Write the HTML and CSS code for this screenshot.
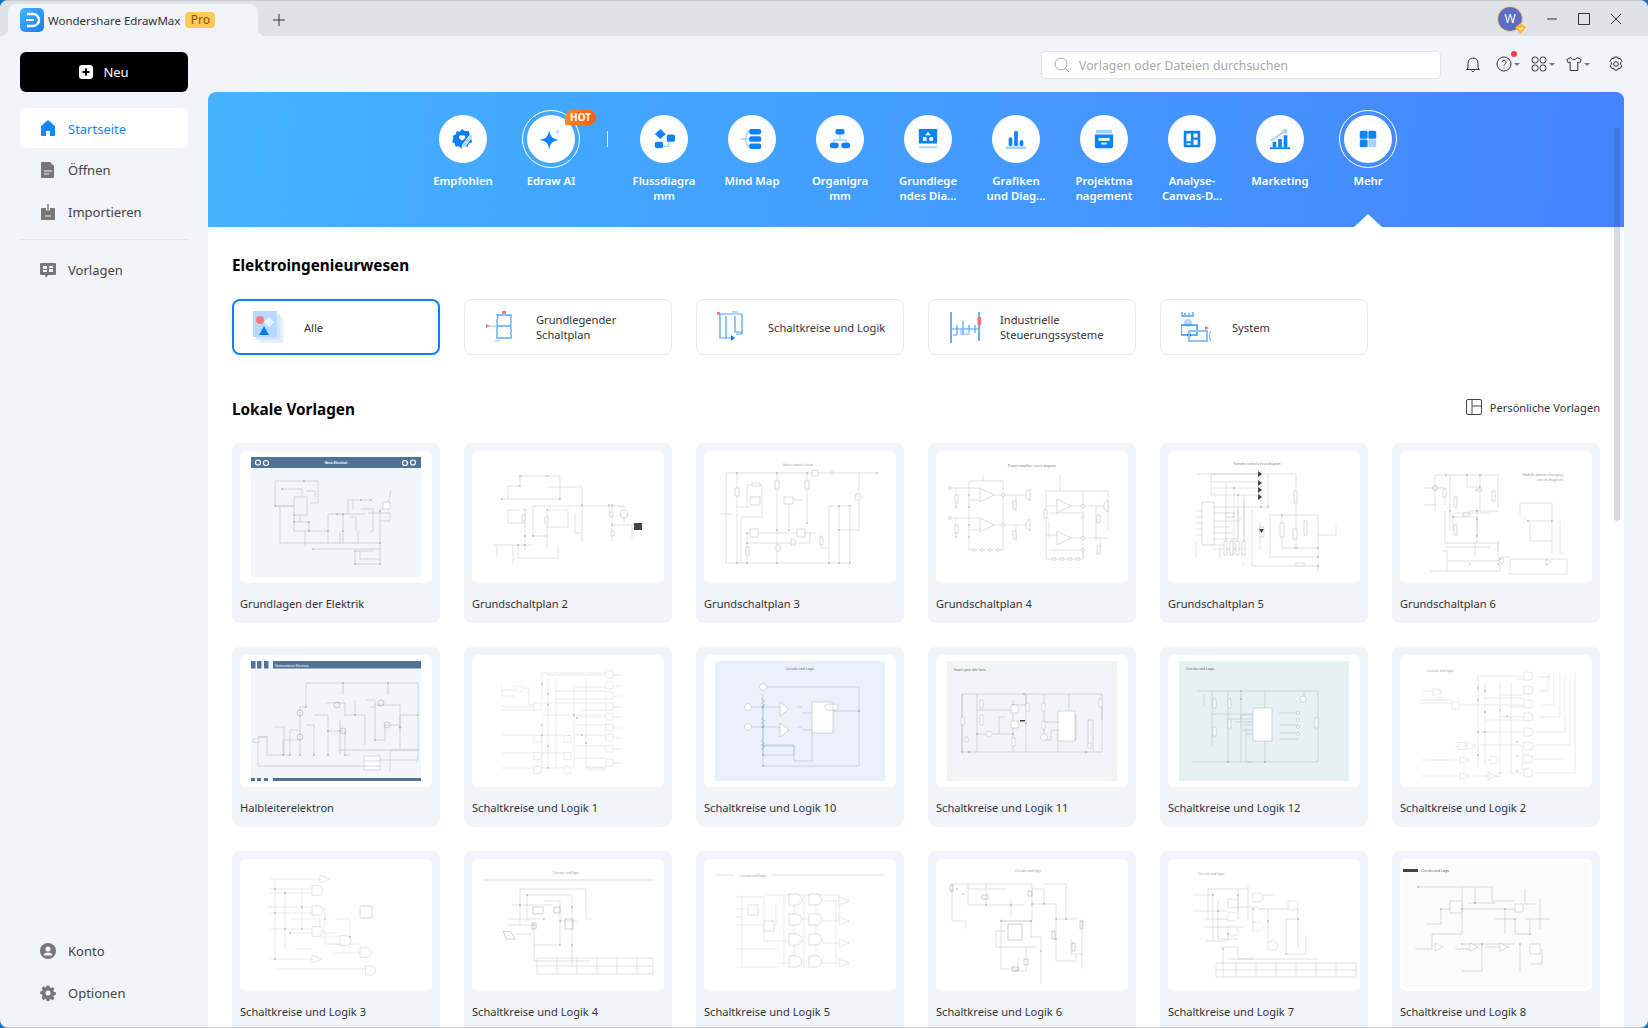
FILE: index.html
```html
<!DOCTYPE html>
<html lang="de">
<head>
<meta charset="utf-8">
<title>Wondershare EdrawMax</title>
<link rel="stylesheet" href="styles.css">
</head>
<body>
<svg class="defs" aria-hidden="true">
  <symbol id="and" viewBox="0 0 10 8" overflow="visible"><path d="M0 0h5a4 4 0 0 1 0 8H0z"/></symbol>
  <symbol id="amp" viewBox="0 0 10 8" overflow="visible"><path d="M0 0l10 4-10 4z"/></symbol>
  <symbol id="box" viewBox="0 0 8 8" overflow="visible"><path d="M0 0h8v8H0z"/></symbol>
</svg>
<div class="app">
  <header class="titlebar">
    <div class="tab">
      <svg class="logo" viewBox="0 0 24 24"><defs><linearGradient id="lg" x1="0" y1="0" x2="1" y2="1"><stop offset="0" stop-color="#45b4ff"/><stop offset="1" stop-color="#1a7cf5"/></linearGradient></defs><rect width="24" height="24" rx="5" fill="url(#lg)"/><path d="M7 6h6a6 6 0 0 1 0 12H7" fill="none" stroke="#fff" stroke-width="2.4"/><path d="M6 12h8" stroke="#fff" stroke-width="2.2"/></svg>
      <span class="tab-title">Wondershare EdrawMax</span>
      <span class="pro">Pro</span>
    </div>
    <svg class="newtab" viewBox="0 0 12 12"><path d="M6 0v12M0 6h12"/></svg>
    <div class="win">
      <div class="avatar">W<svg class="avatar-badge" viewBox="0 0 10 10"><path d="M5 0l5 4-5 6-5-6z" fill="#ffb52e"/><path d="M3 4l2 2 2-2" fill="none" stroke="#fff"/></svg></div>
      <svg class="winbtn" viewBox="0 0 12 12"><path d="M1 6h10"/></svg>
      <svg class="winbtn" viewBox="0 0 12 12"><path d="M.5.5h11v11H.5z"/></svg>
      <svg class="winbtn" viewBox="0 0 12 12"><path d="M1 1l10 10M11 1L1 11"/></svg>
    </div>
  </header>
  <div class="layout">
    <aside class="sidebar">
      <button class="newbtn"><svg viewBox="0 0 14 14"><rect width="14" height="14" rx="3" fill="#fff"/><path d="M7 3.500v7M3.500 7h7" stroke="#000" stroke-width="2"/></svg><span>Neu</span></button>
      <nav class="nav">
        <a class="nav-item active"><svg viewBox="0 0 16 16"><path d="M8 0L1 6v9a1 1 0 0 0 1 1h4v-5h4v5h4a1 1 0 0 0 1-1V6z"/></svg><span>Startseite</span></a>
        <a class="nav-item"><svg viewBox="0 0 16 16"><path d="M2 0h8l4 4v11a1 1 0 0 1-1 1H2a1 1 0 0 1-1-1V1a1 1 0 0 1 1-1z"/><path d="M4 9h8M4 12h5" stroke="#f2f4f9" stroke-width="1.200"/></svg><span>Öffnen</span></a>
        <a class="nav-item"><svg viewBox="0 0 16 16"><path d="M2 4h4v3h4V4h4a1 1 0 0 1 1 1v10a1 1 0 0 1-1 1H2a1 1 0 0 1-1-1V5a1 1 0 0 1 1-1z"/><path d="M8 0v8M5 6l3 3 3-3" fill="none" stroke="#777" stroke-width="1.400"/><path d="M5 12h6" stroke="#f2f4f9" stroke-width="1.200"/></svg><span>Importieren</span></a>
        <div class="nav-sep"></div>
        <a class="nav-item"><svg viewBox="0 0 16 16"><path d="M1 1h14a1 1 0 0 1 1 1v10a1 1 0 0 1-1 1H8l-2 3-1-3H1a1 1 0 0 1-1-1V2a1 1 0 0 1 1-1z"/><path d="M3 4h4v3H3zM9 4h4v2H9zM9 7h4v3H9zM3 8h4v2H3z" fill="#f2f4f9"/></svg><span>Vorlagen</span></a>
      </nav>
      <div class="nav bottom">
        <a class="nav-item"><svg viewBox="0 0 16 16"><circle cx="8" cy="8" r="8"/><circle cx="8" cy="6" r="2.600" fill="#f2f4f9"/><path d="M3.500 12.500c.6-2.400 2.400-3 4.500-3s3.900.6 4.500 3z" fill="#f2f4f9"/></svg><span>Konto</span></a>
        <a class="nav-item"><svg viewBox="0 0 16 16"><path d="M6.500 0h3l.4 2.200 1.500.7 2-1.200 2 2.300-1.300 1.800.6 1.600 2.300.4v3l-2.300.4-.6 1.600 1.300 1.900-2.100 2.100-1.900-1.300-1.500.6-.4 2.300h-3l-.4-2.300-1.500-.6-1.900 1.300L.6 13.700l1.300-1.900-.6-1.600L-1 9.800v-3l2.300-.4.600-1.600L.6 3 2.700.9l1.900 1.300 1.500-.6z" transform="translate(1 .5) scale(.875)"/><circle cx="8" cy="8" r="2.500" fill="#f2f4f9"/></svg><span>Optionen</span></a>
      </div>
    </aside>
    <main class="main">
      <div class="topbar">
        <div class="search"><svg viewBox="0 0 16 16"><circle cx="7" cy="7" r="6"/><path d="M11.500 11.500L15 15"/></svg><span>Vorlagen oder Dateien durchsuchen</span></div>
        <div class="tools">
          <svg class="tool bell" viewBox="0 0 16 16"><path d="M3 12V7a5 5 0 0 1 10 0v5l1.500 1.500h-13zM6.500 14.500a1.600 1.600 0 0 0 3 0"/></svg>
          <span class="tool-wrap help"><svg class="tool" viewBox="0 0 16 16"><circle cx="8" cy="8" r="7"/><path d="M6 6.200a2 2 0 1 1 3 1.800c-.7.400-1 .8-1 1.600M8 11.500v1"/></svg><i class="dot"></i><i class="caret"></i></span>
          <span class="tool-wrap apps"><svg class="tool" viewBox="0 0 16 16"><rect x="1" y="1" width="6" height="6" rx="2.600"/><rect x="9" y="1" width="6" height="6" rx="2.600"/><rect x="1" y="9" width="6" height="6" rx="2.600"/><rect x="9" y="9" width="6" height="6" rx="2.600"/></svg><i class="caret"></i></span>
          <span class="tool-wrap shirt"><svg class="tool" viewBox="0 0 16 16"><path d="M5 1.500L.8 3.500l1.400 3.300 2-.7V14.500h7.600V6.100l2 .7 1.400-3.300L11 1.500c-.5 1.500-1.500 2-3 2s-2.500-.5-3-2z"/></svg><i class="caret"></i></span>
          <svg class="tool gear" viewBox="0 0 16 16"><path d="M6.300.8h3.400l.6 1.900 1.900-.5 1.700 2.900-1.300 1.400v1.600l1.300 1.400-1.700 2.900-1.900-.5-.6 1.900H6.300l-.6-1.900-1.900.5-1.700-2.900 1.300-1.400V6.500L2.100 5.100l1.700-2.900 1.900.5z" transform="translate(0 .2)"/><circle cx="8" cy="8" r="2.300"/></svg>
        </div>
      </div>
      <section class="panel">
        <div class="banner">
          <div class="cat"><span class="disc"><svg viewBox="0 0 24 24"><path d="M11 1l3 2.500 4-.5 1 3.500 3.500 2-1.500 3.500 1 3.500-3.500 1.500-1.500 3.500-3.500-.5-3 2.500-3-2.500-3.500.5-1-3.500L0 15l1.500-3.500L1 8.500l3-1.500 1-3.500 3.500.5z" fill="#0c7df2"/><path d="M11 8.500c1-1.300 3.500-.8 3.500 1.300 0 1.700-2 2.800-3.500 4-1.500-1.200-3.500-2.300-3.500-4 0-2.100 2.500-2.600 3.500-1.300z" fill="#fff"/><path d="M22.500 9l-8.500 11.500-3 1 .5-3L20 7z" fill="#a4d2ff" stroke="#fff"/></svg></span><b>Empfohlen</b></div>
          <div class="cat ring"><span class="disc"><svg viewBox="0 0 24 24"><path d="M10 2.500c1.100 7 3.500 9.300 10.500 10.500-7 1.200-9.400 3.500-10.500 10.500C8.900 16.500 6.500 14.200-.5 13 6.500 11.800 8.900 9.500 10 2.500z" fill="#0f82f7"/><path d="M19 1c.3 2 1 2.700 3 3-2 .3-2.700 1-3 3-.3-2-1-2.700-3-3 2-.3 2.700-1 3-3z" fill="#a4d2ff"/></svg></span><b>Edraw AI</b><i class="hot">HOT</i></div>
          <span class="vsep"></span>
          <div class="cat"><span class="disc"><svg viewBox="0 0 24 24"><path d="M17 13v7H9" fill="none" stroke="#a4d2ff" stroke-width="1.600"/><path d="M8 1l6 5.500L8 12 2 6.500z" fill="#0f82f7"/><rect x="15" y="7" width="9" height="8" rx="2" fill="#0f82f7"/><rect x="2" y="15" width="9" height="7" rx="2" fill="#0f82f7"/></svg></span><b>Flussdiagra<br>mm</b></div>
          <div class="cat"><span class="disc"><svg viewBox="0 0 24 24"><path d="M9 3C5 4 7 12 3 12c4 0 2 8 6 9M0 12h9" fill="none" stroke="#a4d2ff" stroke-width="1.500"/><rect x="9" y="1" width="13" height="6" rx="2" fill="#0f82f7"/><rect x="9" y="9" width="13" height="6" rx="2" fill="#0f82f7"/><rect x="9" y="17" width="13" height="6" rx="2" fill="#0f82f7"/></svg></span><b>Mind Map</b></div>
          <div class="cat"><span class="disc"><svg viewBox="0 0 24 24"><path d="M12 7v6M5 17v-4h14v4" fill="none" stroke="#a4d2ff" stroke-width="1.600"/><rect x="7" y="1" width="10" height="6" rx="2" fill="#0f82f7"/><rect x="1" y="16" width="9.500" height="6" rx="2" fill="#0f82f7"/><rect x="13.500" y="16" width="9.500" height="6" rx="2" fill="#0f82f7"/></svg></span><b>Organigra<br>mm</b></div>
          <div class="cat"><span class="disc"><svg viewBox="0 0 24 24"><rect x="2" y="1" width="20" height="16" rx="1" fill="#0f82f7"/><path d="M12 4l3 4H9z" fill="#fff"/><rect x="6.500" y="10" width="4" height="4" fill="#fff"/><circle cx="15.500" cy="12" r="2.300" fill="#fff"/><rect x="2" y="20" width="20" height="2" fill="#a4d2ff"/></svg></span><b>Grundlege<br>ndes Dia...</b></div>
          <div class="cat"><span class="disc"><svg viewBox="0 0 24 24"><rect x="4" y="10" width="4" height="10" rx="2" fill="#0f82f7"/><rect x="10" y="3" width="4" height="17" rx="2" fill="#0f82f7"/><rect x="16" y="13" width="4" height="7" rx="2" fill="#0f82f7"/><rect x="1" y="20" width="22" height="3" fill="#a4d2ff"/></svg></span><b>Grafiken<br>und Diag...</b></div>
          <div class="cat"><span class="disc"><svg viewBox="0 0 24 24"><path d="M3 3a1 1 0 0 1 1-1h16a1 1 0 0 1 1 1v3H3z" fill="#a4d2ff"/><path d="M2 7h20v13a2 2 0 0 1-2 2H4a2 2 0 0 1-2-2z" fill="#0f82f7"/><path d="M6 11h12v3H6zM9 16h6v2H9z" fill="#fff"/></svg></span><b>Projektma<br>nagement</b></div>
          <div class="cat"><span class="disc"><svg class="small" viewBox="0 0 24 24"><rect x="1" y="1" width="22" height="22" rx="1" fill="#0f82f7"/><path d="M4.500 4.500h6V15h-6zM14 4.500h5.500V10H14zM14 13h5.500v6.500H14zM4.500 17.500h6v2h-6z" fill="#fff"/></svg></span><b>Analyse-<br>Canvas-D...</b></div>
          <div class="cat"><span class="disc"><svg viewBox="0 0 24 24"><path d="M2 14L18 3" fill="none" stroke="#a4d2ff" stroke-width="2"/><path d="M14 2l6-1-1 6z" fill="#a4d2ff"/><path d="M4 15h4v6H4zM10 12h4v9h-4zM16 8h4v13h-4z" fill="#0f82f7"/><rect x="1" y="21" width="22" height="2" fill="#0f82f7"/></svg></span><b>Marketing</b></div>
          <div class="cat ring"><span class="disc"><svg class="small" viewBox="0 0 24 24"><rect x="1" y="1" width="10.500" height="10.500" rx="2" fill="#0f82f7"/><rect x="12.500" y="1" width="10.500" height="10.500" rx="2" fill="#0f82f7"/><rect x="1" y="12.500" width="10.500" height="10.500" rx="2" fill="#0f82f7"/><rect x="12.500" y="12.500" width="10.500" height="10.500" rx="2" fill="#a4d2ff"/></svg></span><b>Mehr</b></div>
          <i class="pointer"></i>
        </div>
        <div class="content">
          <h2 class="h-cat">Elektroingenieurwesen</h2>
          <div class="grid chips">
            <div class="chip selected"><svg viewBox="0 0 32 32"><rect x="6" y="6" width="24" height="26" fill="#e4f0ff"/><rect x="3" y="3" width="24" height="26" fill="#d2e6ff"/><rect x="0" y="0" width="24" height="26" fill="#b7d9ff"/><circle cx="7" cy="9" r="4" fill="#ff7b7b"/><path d="M16 6l5 5-5 5-5-5z" fill="#e8f3ff"/><path d="M11 15l5 9H6z" fill="#0a7cf0"/></svg><span>Alle</span></div>
            <div class="chip"><svg viewBox="0 0 32 32" fill="none" stroke="#5aa9f7" stroke-width="1.300"><path d="M12 4h14c1 2-1 3 0 5s-1 3 0 5l-1 1 1 1c-1 2 1 3 0 5s1 3 0 6H12c-1-3 1-4 0-6s1-3 0-5l1-1-1-1c1-2-1-3 0-5s1-3 0-5zM12 15h14"/><path d="M3 15h9M19 1v3M10 30h5" stroke="#b6d6fa"/><rect x="17" y="0" width="4" height="3" fill="#ff7b7b" stroke="none"/><path d="M1 13l4 2-4 2z" fill="#ff7b7b" stroke="none"/></svg><span>Grundlegender<br>Schaltplan</span></div>
            <div class="chip"><svg viewBox="0 0 32 32" fill="none" stroke="#4a9ff5" stroke-width="1.200"><path d="M3 3v24h12M3 3h22v20h-6M9 5v22M18 5v16h7V3"/><path d="M14 24l4 3-4 3z" fill="#0a7cf0" stroke="none"/><rect x="0" y="1" width="3" height="3" fill="#ff7b7b" stroke="none"/><rect x="15" y="0" width="6" height="4" fill="#b6d6fa" stroke="none"/></svg><span>Schaltkreise und Logik</span></div>
            <div class="chip"><svg viewBox="0 0 32 32" fill="none" stroke="#4a9ff5" stroke-width="1.200"><path d="M2 1v31M30 1v29" stroke="#0a7cf0"/><path d="M2 18h28M8 14v10M14 10v14M20 14v6M26 14v8M4 24h4"/><rect x="12" y="18" width="8" height="5" stroke="#8cc3fa"/><rect x="28.500" y="6" width="3.500" height="8" fill="#ff6b6b" stroke="none"/></svg><span>Industrielle<br>Steuerungssysteme</span></div>
            <div class="chip"><svg viewBox="0 0 32 32" fill="none" stroke="#1186f7" stroke-width="1.300"><path d="M1 1v4h11V1M4 4V2M8 4V2" stroke="#4a9ff5"/><circle cx="7" cy="12" r="4" fill="#b6d6fa" stroke="none"/><rect x="0" y="14" width="16" height="10"/><circle cx="8" cy="24" r="2" fill="#0a7cf0" stroke="none"/><path d="M8 20h18v10H8z" stroke="#8cc3fa" stroke-width="2"/><path d="M24 15l4 2-4 2z" fill="#ff6b6b" stroke="none"/><path d="M30 20c-2 3-2 7 0 10" stroke="#8cc3fa"/></svg><span>System</span></div>
          </div>
          <div class="local-head">
            <h2>Lokale Vorlagen</h2>
            <a class="personal"><svg viewBox="0 0 16 16"><rect x=".5" y=".5" width="15" height="15" rx="1.500"/><path d="M6 .5v15M6 7h9.500"/></svg>Persönliche Vorlagen</a>
          </div>
          <div class="grid templates">

            <article class="tpl"><div class="thumb"><svg viewBox="0 0 192 132">
              <rect class="sheet s-blue" x="11" y="6" width="170" height="120"/><rect class="hdr" x="11" y="6" width="170" height="11"/>
              <g class="gearc"><circle cx="18" cy="11.500" r="2.500"/><circle cx="26" cy="12" r="2.500"/><circle cx="165" cy="12" r="2.500"/><circle cx="173" cy="11.500" r="2.500"/></g>
              <text class="t-white" x="96" y="13">Basic Electrical</text>
              <path class="w dk" d="M35 30H78V52H70M35 30V55H54M42 38H62V46M35 55H54M66 40H75V46M54 46H67V64H54ZM54 64V80H88M54 71H69V80M60 64V71M88 63V92M88 63H125M40 55V92H140M73 98H139M65 96V80M108 49H131M108 49V63M113 49V58M121 58H133V80H130M103 63V92M100 80V92M110 66H116V80M118 80V92M140 60V92M128 62H150V70H140M151 40L148 52M140 60L146 52M115 101V113M115 113H140M120 100V108H140M140 92V113M115 100H133"/>
              <path class="d sm" d="M35 55h0M42 38h0M64 30h0M54 64h0M54 71h0M69 71h0M69 80h0M88 80h0M97 63h0M103 63h0M103 80h0M140 60h0M140 92h0M115 113h0M140 113h0M73 98h0M115 100h0M121 49h0M131 49h0"/>
              <path class="p" d="M143 51h7v7h-7z"/>
            </svg></div><p>Grundlagen der Elektrik</p></article>

            <article class="tpl"><div class="thumb"><svg viewBox="0 0 192 132">
              <path class="w" d="M48 25H88V48H30M48 25V35H36V48M75 36H110V91M61 55H152V72M36 59H48M36 59V72H53M53 59V99M61 55V85H75M75 59V97M75 59H96V76H75M21 94H61M25 94V106M41 94V113M46 94V107H86V94M137 54V64M140 54V74H152M140 74V90M160 74V90M103 62V82H110M152 74H166"/>
              <path class="d sm" d="M48 25h0M75 25h0M48 35h0M88 48h0M53 59h0M75 59h0M110 54h0M137 54h0M140 54h0M140 74h0M53 85h0M61 85h0M46 94h0M53 94h0M30 48h0"/>
              <circle class="p" cx="152" cy="63" r="4"/><path class="p" d="M50 64h3v6h-3zM73 66h3v6h-3zM138 61h3v5h-3zM139 80h3v5h-3z"/>
              <rect x="162" y="72" width="8" height="7" fill="#444"/>
            </svg></div><p>Grundschaltplan 2</p></article>

            <article class="tpl"><div class="thumb"><svg viewBox="0 0 192 132">
              <text class="t-grey" x="94" y="15">Voice control circuit</text>
              <path class="w" d="M22 22H173M22 22V112H146M16 63H28M33 22V112M73 22V112M103 22V72M43 34H58V66H37V112M43 34V56M85 49H98M85 49V79M43 82H112M43 92H106V82M117 82V97H125M125 55V112M125 55H146V112M135 55V112M135 79H155V22M43 82V112M33 56H46"/>
              <path class="d sm" d="M33 22h0M73 22h0M103 22h0M173 22h0M33 112h0M43 112h0M73 112h0M125 112h0M135 112h0M146 112h0M43 82h0M43 92h0M73 79h0M85 79h0M103 72h0M135 55h0M146 55h0M135 79h0"/>
              <path class="p" d="M46 46h10v8H46zM46 78h8v8h-8zM93 78h8v8h-8zM80 46h9v7h-9zM71 30h4v8h-4zM101 30h4v8h-4zM108 19h6v6h-6zM31 37h4v8h-4zM48 32h8v3h-8zM42 96h3v8h-3zM72 94h4v6h-4zM116 86h3v8h-3zM87 88h4v6h-4z"/>
              <circle class="p" cx="154" cy="46" r="3"/><circle class="p" cx="128" cy="22" r="1.500"/>
            </svg></div><p>Grundschaltplan 3</p></article>

            <article class="tpl"><div class="thumb"><svg viewBox="0 0 192 132">
              <text class="t-grey dk" x="96" y="16">Power amplifier circuit diagram</text>
              <path class="w" d="M33 30H67V99M33 30V99H67M14 37H44M14 67H44M33 49H44M33 79H44M58 44H95M58 74H95M20 37V56M20 67V86M80 44V60M80 74V90M110 40H172V80M110 40V108H147V40M121 48V51M110 55H121M135 55H172M113 62H147M120 62H121M135 87H172M113 87V70M110 84H121M113 99H147V108M124 24V40M47 24V30M160 55V90M164 87V100"/>
              <path class="d sm" d="M33 44h0M33 56h0M33 74h0M33 86h0M20 56h0M20 86h0"/>
              <path class="p" d="M44 37l14 7-14 7zM44 67l14 7-14 7zM121 48l14 7-14 7zM121 80l14 7-14 7z"/>
              <path class="p" d="M19 44h3v8h-3zM19 74h3v8h-3zM77 50h3v8h-3zM77 80h3v8h-3zM108 59h3v8h-3zM161 64h3v8h-3zM161 95h3v8h-3zM90 41l4-3v12l-4-3zM90 71l4-3v12l-4-3zM168 52l4-3v12l-4-3z"/>
              <g class="op"><circle cx="14" cy="37" r="1.500"/><circle cx="14" cy="67" r="1.500"/><circle cx="38" cy="99" r="1.500"/><circle cx="46" cy="99" r="1.500"/><circle cx="54" cy="99" r="1.500"/><circle cx="62" cy="99" r="1.500"/><circle cx="118" cy="108" r="1.500"/><circle cx="126" cy="108" r="1.500"/><circle cx="134" cy="108" r="1.500"/><circle cx="142" cy="108" r="1.500"/><circle cx="67" cy="44" r="1.500"/><circle cx="67" cy="74" r="1.500"/><circle cx="147" cy="55" r="1.500"/><circle cx="147" cy="87" r="1.500"/><circle cx="147" cy="99" r="1.500"/><circle cx="147" cy="66" r="1.500"/></g>
            </svg></div><p>Grundschaltplan 4</p></article>

            <article class="tpl"><div class="thumb"><svg viewBox="0 0 192 132">
              <text class="t-grey dk" x="89" y="14">Remote control circuit diagram</text>
              <path class="w" d="M29 23H100M43 23V44M43 23H93M43 31H93M43 37H93M43 44H93M93 23V56M100 23H128V97M100 23V56H46M102 64H150V97M102 64V106H150M114 64V97H150M46 62H62M46 70H72V66M46 76H62M46 82H65M46 88H70V58M46 94H58V31M46 98H76V44M66 37V104M70 44V104M76 50V104M92 70V99M84 58V115H150M28 60H34M28 66H34M28 72H34M28 78H34M28 84H34M28 90V108M52 94V108M74 112H76M150 97V122M150 84H168V74"/>
              <path class="p" d="M34 51h12v43H34zM112 72h4v14h-4zM125 78h4v10h-4zM136 70h3v14h-3zM62 90h3v14h-3zM68 90h3v14h-3zM74 90h3v14h-3zM56 90h3v14h-3zM92 76h4v10h-4zM126 40h3v12h-3zM58 62h8v4h-8zM128 112h8v3h-8z"/>
              <path class="fill" d="M90 20l4 3-4 3zM90 29l4 3-4 3zM90 36l4 3-4 3zM90 43l4 3-4 3zM91 78h5l-2.500 4z"/>
              <path class="d sm" d="M93 56h0M100 56h0M66 37h0M70 44h0M114 64h0M128 97h0M150 97h0M150 106h0M150 115h0"/>
            </svg></div><p>Grundschaltplan 5</p></article>

            <article class="tpl"><div class="thumb"><svg viewBox="0 0 192 132">
              <text class="t-grey big" x="163" y="25">Mobile phone charging</text><text class="t-grey big" x="163" y="30">circuit diagram</text>
              <path class="w" d="M35 24H98V57M35 24V60M24 37H45V54M24 54H37M50 24V80M67 24V36H80M80 24V60M67 60H98M77 56V92M45 60V92H98V100M45 96H90M30 120H100M53 62V80M55 62H90M53 66H77V85M120 52H152V102M120 52V63L128 70H152M130 70V90H152M160 70V102H164M110 108H167V123H110ZM47 120V100H43M100 120V106H110M98 90V110M75 90V105M48 110H100"/>
              <path class="d sm" d="M46 24h0M67 24h0M80 24h0M80 36h0M50 60h0M77 60h0M77 68h0M77 85h0M128 70h0M152 70h0M98 113h0M70 113h0M53 66h0M100 108h0"/>
              <circle class="p dk" cx="35" cy="37" r="2.500"/><path class="p" d="M43 38h3v8h-3zM54 46h3v10h-3zM54 74h3v10h-3zM92 40h3v10h-3zM63 62h7v3h-7zM76 38h6v2h-6zM98 110l5-3v6zM146 108l5 3-5 3z"/>
            </svg></div><p>Grundschaltplan 6</p></article>

            <article class="tpl"><div class="thumb"><svg viewBox="0 0 192 132">
              <rect class="sheet s-blue" x="11" y="6" width="170" height="120"/>
              <path class="hdr" d="M11 6h4.500v7.500H11zM17 6h4.500v7.500H17zM24 6h4.500v7.500H24zM33 6h148v7.500H33zM11 123h4v3h-4zM17 123h4v3h-4zM24 123h4v3h-4zM33 123h148v3H33z"/>
              <text class="t-white left" x="35" y="11.500">Semiconductor Electronic</text>
              <path class="w dk" d="M66 28H178V95H150V117M178 95V105H138M66 28V52H60V75H50V100M50 100H27V82H18V111H135M35 72H44V100M18 82H28M60 75V100M43 100V85H62M66 70H74V100M74 60H88V100M88 76H105V100H110M105 60H125V90M115 45V60M125 45H135V85H145M145 85V70H160V60H178M85 48H105V62M103 28V40M148 28V40M135 50H160V75M160 72V95M98 95H180M130 52H135M100 65V100"/>
              <path class="d sm" d="M103 28h0M148 28h0M43 100h0M60 100h0M74 100h0M88 100h0M105 100h0M50 100h0M88 76h0M66 52h0M115 60h0M135 85h0M160 72h0M178 60h0"/>
              <g class="op dk"><circle cx="60" cy="82" r="3"/><circle cx="60" cy="58" r="3"/><circle cx="97" cy="50" r="3"/><circle cx="103" cy="76" r="3"/><circle cx="141" cy="48" r="3"/><circle cx="147" cy="70" r="3"/></g>
              <path class="p" d="M124 101h16v14h-16zM124 106h16M124 111h16M13 84h6v3h-6z"/>
            </svg></div><p>Halbleiterelektron</p></article>

            <article class="tpl"><div class="thumb"><svg viewBox="0 0 192 132">
              <path class="w lt" d="M70 18V48M70 18H134M74 20H134M30 35H44M30 30V41H44M50 33H57V50H62M29 52H62M29 55H62M30 80H62M30 98H62M30 113H62M70 80H92M70 98H92M70 113H92M70 48H134M70 60H134M70 70V113M76 23V113M84 23V113M82 36H134M82 44H134M102 32H134M102 70H134M102 80H134M102 91H134M102 103H134M102 32V113M104 62H134M110 55H134M114 23V115M116 115H134M114 112H134M114 113H134M138 20H150M138 31H150M138 41H150M138 52H150M138 62H150M138 73H150M138 83H150M138 94H150M138 108H150"/>
              <g class="lg"><use href="#box" x="62" y="48" width="7" height="7"/><use href="#box" x="62" y="80" width="7" height="8"/><use href="#box" x="62" y="97" width="7" height="8"/><use href="#box" x="62" y="111" width="7" height="8"/><use href="#box" x="92" y="80" width="7" height="8"/><use href="#box" x="92" y="97" width="7" height="8"/><use href="#box" x="92" y="111" width="7" height="8"/><use href="#box" x="134" y="16" width="7" height="7"/><use href="#box" x="134" y="27" width="7" height="7"/><use href="#box" x="134" y="37" width="7" height="7"/><use href="#box" x="134" y="48" width="7" height="7"/><use href="#box" x="134" y="58" width="7" height="7"/><use href="#box" x="134" y="69" width="7" height="7"/><use href="#box" x="134" y="79" width="7" height="7"/><use href="#box" x="134" y="90" width="7" height="7"/><use href="#box" x="134" y="104" width="7" height="7"/><use href="#box" x="44" y="31" width="6" height="6"/></g>
              <path class="d sm" d="M70 29h0M76 39h0M76 50h0M70 70h0M76 91h0M102 60h0M105 63h0M110 80h0M114 88h0M70 80h0M76 113h0"/>
            </svg></div><p>Schaltkreise und Logik 1</p></article>

            <article class="tpl"><div class="thumb"><svg viewBox="0 0 192 132">
              <rect class="sheet s-sky" x="11" y="6" width="170" height="120"/>
              <text class="t-dark" x="96" y="15">Circuits and Logic</text>
              <path class="w bl" d="M59 32H155V111H59M44 52H76M59 39V111M44 72H76M59 52V100M98 58H116M98 75H108V106H90V90M90 90H59M59 91H90V100H59M120 56H155M93 52H98M93 72H98"/>
              <path class="d sm" d="M59 52h0M59 72h0M59 100h0M59 111h0M155 56h0"/>
              <path class="p wf" d="M76 47l9 7-9 7zM76 68l9 7-9 7zM108 47h21v31h-21zM121 52c0-2 1-3 3-3h7c2 0 3 1 3 3s-1 3-3 3h-7c-2 0-3-1-3-3z"/>
              <path class="w bl" d="M59 42l-2 2 4 2-4 2 4 2-4 2 2 2M59 62l-2 2 4 2-4 2 4 2-4 2 2 2M59 84l-2 2 4 2-4 2 4 2-4 2 2 2"/>
              <g class="op wf"><ellipse cx="59" cy="32" rx="3.500" ry="3.500"/><circle cx="44" cy="52" r="3.500"/><circle cx="44" cy="72" r="3.500"/></g>
            </svg></div><p>Schaltkreise und Logik 10</p></article>

            <article class="tpl"><div class="thumb"><svg viewBox="0 0 192 132">
              <rect class="sheet s-grey" x="11" y="6" width="170" height="120"/>
              <text class="t-dark left" x="18" y="16">Insert your title here</text>
              <path class="w dk" d="M26 39H166V97H26ZM26 39V97M41 39V58M41 58V97M77 50H90V39M77 45V97M77 55H41M90 40V97M108 39V85M133 39V60M108 85H115V75M115 75H122V97M108 67H124M122 60H140V85M140 85H122M41 79H77M63 79V62H69M166 50V65M152 65H157V97M152 65V90"/>
              <path class="d sm" d="M88 39h0M26 97h0M33 97h0M77 79h0M77 50h0M41 79h0M150 97h0M90 68h0"/>
              <path class="p" d="M122 56h17v30h-17zM75 50h7v8h-7zM75 66h7v7h-7zM44 45h3v8h-3zM44 60h3v10h-3zM90 48h3v8h-3zM106 48h3v8h-3zM106 66h3v8h-3zM163 44h3v8h-3zM25 62h3v8h-3zM152 88h3v5h-3zM76 83h3v8h-3zM29 82h3v5h-3z"/>
              <path class="fill" d="M84 65h5v1.500h-5z"/>
              <g class="op"><circle cx="108" cy="82" r="3.500"/><circle cx="53" cy="79" r="3"/></g>
            </svg></div><p>Schaltkreise und Logik 11</p></article>

            <article class="tpl"><div class="thumb"><svg viewBox="0 0 192 132">
              <rect class="sheet s-teal" x="11" y="6" width="170" height="120"/>
              <text class="t-dark left" x="18" y="15">Circuits and Logic</text>
              <path class="w tl" d="M29 36H150M150 36V107H24M44 36V90M60 36V107M73 36V107M73 64V60H85M44 59H86M60 64H85M67 67H85M73 70H85M78 73V107H85M74 75H85M78 79H85M97 36V56M97 80V107M111 58H130M111 70H130M111 78H130M111 84H130M136 36V46M36 40V50"/>
              <path class="d sm" d="M73 36h0M73 44h0M97 107h0M60 107h0"/>
              <path class="p wf" d="M85 53h19v33H85zM45 44h3v9h-3zM60 44h3v9h-3zM45 72h3v9h-3zM60 64h3v9h-3zM147 63h3v10h-3z"/>
              <g class="op wf"><circle cx="135" cy="44" r="3"/><circle cx="130" cy="58" r="1.500"/><circle cx="130" cy="65" r="1.500"/><circle cx="130" cy="72" r="1.500"/><circle cx="130" cy="79" r="1.500"/></g>
            </svg></div><p>Schaltkreise und Logik 12</p></article>

            <article class="tpl"><div class="thumb"><svg viewBox="0 0 192 132">
              <text class="t-grey left" x="27" y="17">Circuits and logic</text>
              <path class="w lt" d="M22 36H33M20 45H52M20 48H52M37 34H40V45M52 50H125M78 21H124M78 21V112M85 28V110M100 27V117M117 24H124M85 43H124M100 40H124M107 52H124M111 27V118M100 62H124M85 65H124M78 77H125M55 91H67M22 105H58M22 121H58M35 105H45M80 90H112M88 105H100M72 121H100M112 90H122M110 118H122M122 90V116M138 22H150V18M140 36H148V18M140 50H154V18M140 62H160V18M135 77H165V18M135 90H170V18M135 104H165M135 118H175V18"/>
              <g class="lg"><use href="#amp" x="33" y="33" width="9" height="8"/><use href="#box" x="52" y="47" width="7" height="7"/><use href="#box" x="58" y="87" width="7" height="8"/><use href="#amp" x="67" y="87" width="9" height="8"/><use href="#amp" x="60" y="101" width="9" height="8"/><use href="#box" x="90" y="101" width="7" height="8"/><use href="#amp" x="60" y="117" width="9" height="8"/><use href="#amp" x="88" y="117" width="9" height="8"/><use href="#and" x="124" y="17" width="10" height="8"/><use href="#and" x="124" y="31" width="10" height="8"/><use href="#and" x="124" y="45" width="10" height="8"/><use href="#and" x="124" y="58" width="10" height="8"/><use href="#and" x="124" y="73" width="10" height="8"/><use href="#and" x="124" y="87" width="10" height="8"/><use href="#and" x="124" y="100" width="10" height="8"/><use href="#and" x="124" y="114" width="10" height="8"/></g>
              <path class="d sm" d="M78 33h0M85 36h0M78 45h0M85 57h0M100 55h0M107 61h0M78 77h0M85 77h0M78 100h0M100 118h0M117 87h0M117 101h0M117 116h0"/>
            </svg></div><p>Schaltkreise und Logik 2</p></article>

            <article class="tpl"><div class="thumb"><svg viewBox="0 0 192 132">
              <path class="w lt" d="M30 20H88M30 30H80M30 34H80M35 20V100M45 30V90M62 30V70M28 48H72M28 54H72M50 60H80V78H100M28 70H72M50 74H95M85 48V85H100M95 60H110M110 60V90M93 94H125M55 90H72M28 100H75M35 110H130M90 85H120"/>
              <g class="lg"><use href="#amp" x="80" y="16" width="10" height="8"/><use href="#and" x="72" y="26" width="12" height="11"/><use href="#and" x="72" y="46" width="12" height="11"/><use href="#and" x="72" y="67" width="12" height="11"/><use href="#and" x="100" y="76" width="12" height="11"/><use href="#and" x="120" y="88" width="12" height="11"/><use href="#amp" x="72" y="96" width="10" height="8"/><use href="#and" x="125" y="107" width="12" height="9"/><use href="#box" x="120" y="47" width="12" height="12"/></g>
              <path class="d sm" d="M35 30h0M45 34h0M62 48h0M35 54h0M50 74h0M45 70h0M85 60h0M35 100h0M62 70h0M110 78h0"/>
            </svg></div><p>Schaltkreise und Logik 3</p></article>

            <article class="tpl"><div class="thumb"><svg viewBox="0 0 192 132">
              <text class="t-grey" x="94" y="15">Circuits and logic</text>
              <path class="w tl" d="M13 21H181"/>
              <path class="w" d="M48 30H114V60M55 36H100M48 30V66M55 36V62M40 46H80M36 66H62M36 60H72M72 42H88V86M88 62H105M100 36V108M62 66V86H88M44 75H60M62 86V102H118M114 60H120"/>
              <path class="d sm" d="M55 36h0M48 46h0M72 60h0M88 62h0M100 48h0M62 66h0M88 86h0M100 86h0"/>
              <path class="p dk" d="M31 72l8 1 4 7h-9zM61 48h10v7H61zM82 48h6v6h-6zM93 60h8v10h-8zM60 64h4v6h-4z"/>
              <path class="w" d="M65 99H181V115H65ZM85 99V115M105 99V115M125 99V115M145 99V115M165 99V115M65 107H181"/>
            </svg></div><p>Schaltkreise und Logik 4</p></article>

            <article class="tpl"><div class="thumb"><svg viewBox="0 0 192 132">
              <path class="w dk" d="M13 16H30M68 16H181" stroke-dasharray="2 .5"/>
              <text class="t-grey" x="49" y="18">Circuits and logic</text>
              <path class="w lt" d="M38 36V108M32 50H50M32 38H60V82M60 82H100M32 58H38M32 66H72V45M60 36H135V60M80 36V108M100 36V108M90 40V106M112 36V108M118 42H135M118 62H135M118 84H135M118 104H135M90 60H118M112 82H118M75 104H100M32 90H75M32 108H75M132 42V108"/>
              <g class="lg"><use href="#box" x="44" y="44" width="10" height="14"/><use href="#box" x="60" y="60" width="10" height="14"/><use href="#and" x="85" y="34" width="14" height="13"/><use href="#and" x="85" y="54" width="14" height="13"/><use href="#and" x="85" y="74" width="14" height="13"/><use href="#and" x="85" y="96" width="14" height="13"/><use href="#and" x="105" y="34" width="14" height="13"/><use href="#and" x="105" y="54" width="14" height="13"/><use href="#and" x="105" y="74" width="14" height="13"/><use href="#and" x="105" y="96" width="14" height="13"/><use href="#amp" x="135" y="38" width="10" height="8"/><use href="#amp" x="135" y="58" width="10" height="8"/><use href="#amp" x="135" y="80" width="10" height="8"/><use href="#amp" x="135" y="100" width="10" height="8"/></g>
            </svg></div><p>Schaltkreise und Logik 5</p></article>

            <article class="tpl"><div class="thumb"><svg viewBox="0 0 192 132">
              <text class="t-grey" x="92" y="13">Circuits and logic</text>
              <path class="w" d="M16 25H96V62H65M16 25V62H30M32 30H70M30 62V70M32 25V46H50M50 25V46M50 46H88M75 40V58M96 30H108V45H120V60M96 45H108M108 25H130V60M120 60H140V58M65 62H95V78H105V125M65 60V110H80V113M70 72H60V88H100M90 88V112M90 112H76M82 112V100M120 60V102H140V95M135 80V95H146M146 60V110"/>
              <path class="d sm" d="M21 30h0M27 35h0M50 46h0M75 46h0M96 45h0M108 45h0M65 62h0M95 62h0M105 92h0M120 60h0M130 60h0M120 80h0"/>
              <path class="p dk" d="M14 26h3v6h-3zM46 36h6v4H46zM92 32h4v5h-4zM72 65h14v16H72zM116 72h3v8h-3zM136 84h3v8h-3zM144 62h3v8h-3zM88 100h4v6h-4zM76 108h6v4h-6z"/>
            </svg></div><p>Schaltkreise und Logik 6</p></article>

            <article class="tpl"><div class="thumb"><svg viewBox="0 0 192 132">
              <text class="t-grey left" x="30" y="16">Circuits and logic</text>
              <path class="w" d="M40 30H80M40 30V60M45 33V82M25 36H45M25 52H60M36 60H60M36 68H76M50 40V80H70M60 48H90M70 36V52M70 30V60M80 24V62M85 50V70M52 88H70V100H85M90 36H106M90 50H130V90M130 60H118V95H138M100 50V80M38 82H60V75M138 76V95M60 100H150M55 90V118"/>
              <g class="lg"><use href="#and" x="60" y="40" width="11" height="9"/><use href="#and" x="60" y="53" width="11" height="9"/><use href="#and" x="60" y="68" width="11" height="9"/><use href="#and" x="85" y="34" width="11" height="9"/><use href="#and" x="85" y="63" width="11" height="9"/><use href="#and" x="120" y="42" width="11" height="9"/><use href="#and" x="100" y="82" width="11" height="9"/></g>
              <path class="w" d="M48 104H188V118H48ZM68 104V118M88 104V118M108 104V118M128 104V118M148 104V118M168 104V118M48 111H188"/>
              <path class="d sm" d="M45 36h0M50 52h0M70 36h0M85 50h0M60 75h0M100 62h0M118 95h0M130 60h0M55 90h0"/>
            </svg></div><p>Schaltkreise und Logik 7</p></article>

            <article class="tpl"><div class="thumb"><svg viewBox="0 0 192 132">
              <rect class="sheet s-tile" x="3" y="4" width="186" height="124"/>
              <rect x="3" y="10" width="15" height="3" fill="#444"/><text class="t-dark left" x="21" y="13">Circuits and Logic</text>
              <path class="w dk" d="M18 28H92M62 28V50M41 50H115M41 50V65H26M62 50V75H50M68 44H95M75 28V44M92 28V42H115M125 30V45H135M140 40V70M95 60H115V75H130V60M125 60H150M105 50V75M32 75H50M32 75V90H15M62 85H115M55 90H70M82 85V112H62M85 88H110M120 85V112M142 90V105M130 105H142"/>
              <path class="lg dkst" d="M50 42h12v12H50zM70 84l8 4-8 4zM100 84l8 4-8 4zM35 84l8 4-8 4zM115 45h8v8h-8zM130 85h10v10h-10z"/>
              <path class="d sm" d="M41 50h0M62 50h0M75 44h0M105 50h0M115 60h0M130 75h0M62 85h0M82 85h0M120 85h0M18 28h0"/>
            </svg></div><p>Schaltkreise und Logik 8</p></article>
          </div>
        </div>
        <i class="scrollthumb"></i>
      </section>
    </main>
  </div>
</div>
</body>
</html>
```
FILE: styles.css
```css
* { box-sizing: border-box; }
html, body { margin: 0; height: 100%; background: #1173c9; overflow: hidden; }
body { font-family: "Noto Sans", "Open Sans", sans-serif; color: #333; }
.defs { position: absolute; width: 0; height: 0; }

.app { width: 1648px; height: 1028px; display: flex; flex-direction: column; background: #f2f4f9; border-radius: 8px; border-top: 1px solid #c9cbd0; border-bottom: 1px solid #c9cbd0; overflow: hidden; }

/* title bar */
.titlebar { height: 35px; flex: none; display: flex; align-items: flex-end; background: #e1e2e6; padding-left: 8px; position: relative; }
.tab { width: 250px; height: 32px; background: #f2f4f9; border-radius: 8px 8px 0 0; display: flex; align-items: center; padding-left: 12px; position: relative; }
.tab::before, .tab::after { content: ""; position: absolute; bottom: 0; width: 8px; height: 8px; }
.tab::before { left: -8px; background: radial-gradient(circle at 0 0, transparent 8px, #f2f4f9 8.500px); }
.tab::after { right: -8px; background: radial-gradient(circle at 100% 0, transparent 8px, #f2f4f9 8.500px); }
.logo { width: 24px; height: 24px; flex: none; }
.tab-title { font-size: 11.500px; color: #333; margin-left: 4px; white-space: nowrap; }
.pro { margin-left: 5px; width: 30px; height: 16px; background: #ffc857; border-radius: 4px; font-size: 12px; line-height: 16px; text-align: center; color: #7b5a10; }
.newtab { width: 12px; height: 12px; margin: 0 0 10px 15px; fill: none; stroke: #333; stroke-width: 1; }
.win { margin-left: auto; height: 35px; display: flex; align-items: center; padding-right: 26px; }
.avatar { width: 26px; height: 26px; border-radius: 50%; background: #5a6dc2; border: 1.500px solid #ffd27a; color: #fff; font-size: 12px; display: flex; align-items: center; justify-content: center; position: relative; margin-right: 23px; }
.avatar-badge { position: absolute; right: -4px; bottom: -3px; width: 11px; height: 11px; }
.winbtn { width: 12px; height: 12px; fill: none; stroke: #333; stroke-width: 1; margin-left: 20px; }
.avatar + .winbtn { margin-left: 0; }

.layout { flex: 1; display: flex; min-height: 0; }

/* sidebar */
.sidebar { width: 208px; flex: none; padding: 16px 20px 14px; display: flex; flex-direction: column; }
.newbtn { width: 168px; height: 40px; flex: none; background: #000; border: 0; border-radius: 6px; color: #fff; font: 13px "Noto Sans", sans-serif; display: flex; align-items: center; justify-content: center; gap: 10px; }
.newbtn svg { width: 14px; height: 14px; }
.nav { margin-top: 16px; display: flex; flex-direction: column; gap: 2px; }
.nav.bottom { margin-top: auto; }
.nav-item { height: 40px; border-radius: 6px; display: flex; align-items: center; gap: 12px; padding-left: 20px; font-size: 13px; color: #444; }
.nav-item svg { width: 16px; height: 16px; flex: none; fill: #777; }
.nav-item.active { background: #fff; color: #1a84ff; }
.nav-item.active span { padding-top: 1px; }
.nav-item.active svg { fill: #1086ff; }
.nav-sep { height: 1px; background: #e3e5ea; margin: 5px 0 8px; }

/* main */
.main { flex: 1; min-width: 0; display: flex; flex-direction: column; }
.topbar { height: 56px; flex: none; display: flex; align-items: center; position: relative; padding-left: 833px; }
.search { width: 400px; height: 28px; background: #fff; border: 1px solid #e2e4e9; border-radius: 4px; display: flex; align-items: center; gap: 9px; padding-left: 12px; margin-top: 1px; font-size: 12.150px; color: #a9a9a9; letter-spacing: .1px; }
.search span { padding-top: 1px; }
.search svg { width: 16px; height: 16px; fill: none; stroke: #a9a9a9; stroke-width: 1; flex: none; }
.tools { display: flex; align-items: center; margin-left: 24px; }
.tool { width: 16px; height: 16px; fill: none; stroke: #333; stroke-width: 1; display: block; }
.tool-wrap { position: relative; display: block; }
.bell { margin-right: 15px; }
.help { margin-right: 19px; }
.apps { margin-right: 19px; }
.shirt { margin-right: 26px; }
.dot { position: absolute; top: -5px; right: -5px; width: 6px; height: 6px; border-radius: 50%; background: #ff3b4a; }
.caret { position: absolute; left: 18px; top: 7px; border: 3px solid transparent; border-top: 3px solid #777; border-bottom: 0; }

.panel { flex: 1; min-height: 0; margin-right: 24px; position: relative; background: #fff; border-radius: 8px 8px 0 0; overflow: hidden; }
.banner { height: 135px; display: flex; align-items: flex-start; padding: 23px 0 0 211px; position: relative; background: linear-gradient(95deg, #41b2ff 0%, #4498ff 60%, #4484ff 100%); }
.banner::before { content: ""; position: absolute; inset: 0; background: repeating-radial-gradient(circle at 50% 240%, rgba(255,255,255,.05) 0 1px, transparent 1px 3px); -webkit-mask-image: linear-gradient(90deg, #000, transparent 25%); mask-image: linear-gradient(90deg, #000, transparent 25%); }
.cat { width: 88px; display: flex; flex-direction: column; align-items: center; position: relative; color: #fff; }
.cat b { margin-top: 10px; font-size: 11.300px; font-weight: 600; line-height: 15px; text-align: center; white-space: nowrap; }
.disc { width: 48px; height: 48px; border-radius: 50%; background: #fff; display: flex; align-items: center; justify-content: center; position: relative; }
.disc svg { width: 22px; height: 22px; }
.disc svg.small { width: 18px; height: 18px; }
.ring .disc::after { content: ""; position: absolute; inset: -5px; border: 1.500px solid #fff; border-radius: 50%; }
.hot { position: absolute; left: 58px; top: -5px; width: 31px; height: 15px; border-radius: 8px 8px 8px 2px; background: linear-gradient(90deg, #ff8a1f, #ff5a12); font-size: 10px; font-style: normal; font-weight: 700; line-height: 15px; text-align: center; color: #fff; }
.vsep { width: 1px; height: 16px; margin: 16px 12px 0; background: rgba(255,255,255,.8); flex: none; }
.pointer { position: absolute; left: 1146px; bottom: 0; width: 28px; height: 13px; background: #fff; clip-path: polygon(50% 0, 100% 100%, 0 100%); }
.scrollthumb { position: absolute; right: 4px; top: 36px; width: 6px; height: 393px; border-radius: 3px; background: rgba(40,50,70,.17); }

/* content */
.content { padding: 0 24px; }
h2 { margin: 0; font-size: 15.300px; font-weight: 700; color: #000; line-height: 20px; }
.h-cat { padding: 28px 0 0; }
.grid { display: grid; grid-template-columns: repeat(6, 208px); gap: 24px; }
.chips { margin-top: 24px; }
.chip { height: 56px; border: 1px solid #e8e9ec; border-radius: 8px; display: flex; align-items: center; gap: 19px; padding-left: 20px; font-size: 11.150px; line-height: 15px; color: #333; }
.chip svg { width: 32px; height: 32px; flex: none; }
.chip.selected { border: 2px solid #0a80ff; padding-left: 19px; }
.local-head { display: flex; justify-content: space-between; align-items: center; margin-top: 44px; height: 20px; margin-bottom: 24px; }
.personal { display: flex; align-items: center; gap: 8px; font-size: 11.100px; color: #333; margin-top: -4px; }
.personal svg { width: 16px; height: 16px; fill: none; stroke: #444; stroke-width: 1; }
.templates { row-gap: 24px; }
.tpl { height: 180px; background: #f2f4f9; border-radius: 8px; padding: 8px 8px 0; }
.thumb { height: 132px; background: #fff; border-radius: 6px; overflow: hidden; }
.thumb svg { display: block; width: 192px; height: 132px; }
.tpl p { margin: 11px 0 0; font-size: 11.100px; line-height: 20px; color: #333; white-space: nowrap; }

/* thumbnail drawings */
.w { fill: none; stroke: #c2c4c6; stroke-width: .5; }
.w.dk { stroke: #aeb4ba; }
.w.lt { stroke: #d4d6d8; }
.w.bl { stroke: #a9b3c2; }
.w.tl { stroke: #a7bfc2; }
.d { fill: none; stroke: #444; stroke-width: 1.300; stroke-linecap: round; }
.d.sm { stroke-width: 1; }
.p, .op { fill: #fff; stroke: #b5b7ba; stroke-width: .5; }
.p.dk, .op.dk { stroke: #9aa0a6; fill: none; }
.wf, .op.wf { fill: #fff; stroke: #a9b3c2; }
.lg { fill: #fff; stroke: #cfd1d3; stroke-width: .5; }
.lg.dkst { stroke: #b0b4b8; }
.fill { fill: #444; }
.sheet { stroke: none; }
.s-blue { fill: #f2f5f9; }
.s-sky { fill: #eaf1fb; }
.s-grey { fill: #f2f5f5; }
.s-teal { fill: #e6f1f3; }
.s-tile { fill: #fbfbfc; }
.hdr { fill: #4f7296; }
.gearc { fill: none; stroke: #fff; stroke-width: 1.200; }
svg text { font-family: "Liberation Sans", sans-serif; font-size: 3.500px; text-anchor: middle; }
.t-white { fill: #fff; font-weight: 700; font-size: 3px; }
.t-white.left { text-anchor: start; font-weight: 400; }
.t-grey { fill: #a5a5a5; }
.t-grey.dk { fill: #8b8b8b; }
.t-grey.left, .t-dark.left { text-anchor: start; }
.t-grey.big { font-size: 4px; text-anchor: end; }
.t-dark { fill: #666; font-size: 3.600px; }
```
